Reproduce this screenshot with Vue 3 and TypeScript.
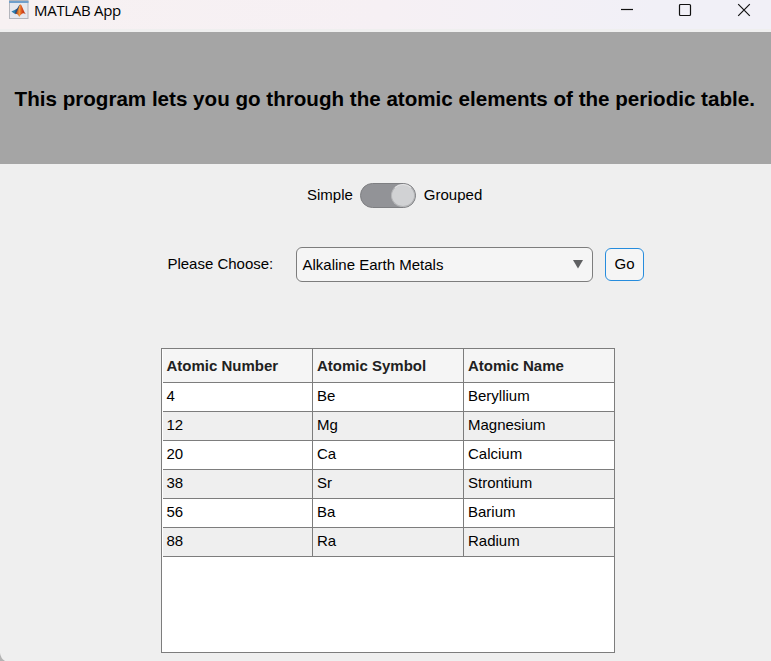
<script setup lang="ts">
import { ref } from 'vue'

interface AtomicElement {
  number: number
  symbol: string
  name: string
}

const grouped = ref<boolean>(true)
const group = ref<string>('Alkaline Earth Metals')
const columns: string[] = ['Atomic Number', 'Atomic Symbol', 'Atomic Name']
const elements: AtomicElement[] = [
  { number: 4, symbol: 'Be', name: 'Beryllium' },
  { number: 12, symbol: 'Mg', name: 'Magnesium' },
  { number: 20, symbol: 'Ca', name: 'Calcium' },
  { number: 38, symbol: 'Sr', name: 'Strontium' },
  { number: 56, symbol: 'Ba', name: 'Barium' },
  { number: 88, symbol: 'Ra', name: 'Radium' },
]
</script>

<template>
  <div class="window">
    <header class="titlebar">
      <svg class="logo" width="20" height="20" viewBox="0 0 20 20">
        <defs>
          <linearGradient id="flame" x1="0" x2="1">
            <stop offset="0" stop-color="#8d2515" />
            <stop offset="0.4" stop-color="#f39a3c" />
            <stop offset="0.65" stop-color="#d9481c" />
            <stop offset="1" stop-color="#a92c12" />
          </linearGradient>
        </defs>
        <rect x="0.5" y="0.5" width="18.5" height="18" fill="#e6e8ee" stroke="#b3b5bc" />
        <rect x="0" y="1" width="19.5" height="2" fill="#6f9fcb" />
        <path d="M2.4 11.6 6.7 9.5 9.5 11.4 6.4 14.2z" fill="#2f7fae" />
        <path d="M6.7 9.5C8.8 9 9.8 4.6 11.3 4.6L9.5 11.5 7.3 14 6.1 12.7z" fill="#294f7c" />
        <path d="M6.2 13.8C8.4 13.3 10.2 4.6 11.4 4.6 13.1 4.8 14 10.5 16.8 14.2 14 12.4 12.7 13.4 10.2 17 9.3 14.8 8.2 13.7 6.2 13.8z" fill="url(#flame)" />
      </svg>
      <span class="app-name">MATLAB App</span>
      <div class="controls">
        <svg width="14" height="14" viewBox="0 0 14 14"><path d="M2 6.5H14" /></svg>
        <svg width="14" height="14" viewBox="0 0 14 14"><rect x="1.5" y="1.5" width="11" height="11" rx="1" /></svg>
        <svg width="14" height="14" viewBox="0 0 14 14"><path d="M1.2 1.2 12.8 12.8M12.8 1.2 1.2 12.8" /></svg>
      </div>
    </header>
    <section class="banner">
      <h1>This program lets you go through the atomic elements of the periodic table.</h1>
    </section>
    <main class="content">
      <div class="mode">
        <span>Simple</span>
        <button class="switch" :class="{ on: grouped }" aria-label="Mode" @click="grouped = !grouped">
          <span class="knob"></span>
        </button>
        <span>Grouped</span>
      </div>
      <div class="chooser">
        <span class="choose-label">Please Choose:</span>
        <div class="dropdown">
          <span>{{ group }}</span>
          <svg width="10" height="9" viewBox="0 0 10 9"><path d="M0 0H10L5 8.5z" fill="#5f6062" /></svg>
        </div>
        <button class="go">Go</button>
      </div>
      <div class="grid">
        <div class="row head">
          <span v-for="c in columns" :key="c" class="cell">{{ c }}</span>
        </div>
        <div v-for="e in elements" :key="e.number" class="row">
          <span class="cell">{{ e.number }}</span>
          <span class="cell">{{ e.symbol }}</span>
          <span class="cell">{{ e.name }}</span>
        </div>
      </div>
    </main>
    <svg class="corner" width="5" height="8" viewBox="0 0 5 8"><path d="M0 0Q0.5 5 5 8H0z" fill="#b4b4b4" /></svg>
  </div>
</template>

<style>
body {
  margin: 0;
}
</style>

<style scoped>
.window {
  position: relative;
  box-sizing: border-box;
  width: 771px;
  height: 661px;
  overflow: hidden;
  background: #efefef;
  color: #000;
  font-family: "Liberation Sans", Arial, sans-serif;
  font-size: 15px;
  line-height: 18px;
}
.titlebar {
  display: flex;
  align-items: flex-start;
  box-sizing: border-box;
  height: 32px;
  padding-left: 9px;
  border-bottom: 3px solid #efefef;
  background: linear-gradient(90deg, #f7f1f2, #f6f0f4 50%, #f1f0f7 85%);
}
.logo {
  flex: none;
}
.app-name {
  margin: 0 0 0 5px;
  font-family: "Open Sans", "Noto Sans", sans-serif;
  font-size: 15px;
  line-height: 20px;
  letter-spacing: -0.3px;
}
.controls {
  display: flex;
  gap: 45px;
  margin: 3px 20px 0 auto;
}
.controls path,
.controls rect {
  fill: none;
  stroke: #111;
  stroke-width: 1.2;
}
.banner {
  display: flex;
  align-items: center;
  justify-content: center;
  height: 132px;
  background: #a5a5a5;
}
h1 {
  margin: 2px 1.5px 0 0;
  font-size: 20.6px;
  line-height: 26px;
  white-space: nowrap;
}
.content {
  display: flex;
  flex-direction: column;
}
.mode {
  display: flex;
  align-items: center;
  height: 26px;
  margin: 18px 0 0 307px;
}
.switch {
  display: flex;
  box-sizing: border-box;
  width: 56px;
  height: 25px;
  margin: 1px 8px 0 7px;
  padding: 0;
  border: 1px solid #7e7f82;
  border-radius: 13px;
  background: #929397;
}
.switch.on {
  justify-content: flex-end;
}
.knob {
  box-sizing: border-box;
  width: 24px;
  height: 23px;
  border: 1px solid #b5b6b8;
  border-top-color: #e4e4e5;
  border-radius: 50%;
  background: #d1d2d4;
}
.chooser {
  display: flex;
  align-items: center;
  height: 35px;
  margin: 39px 0 0 167px;
}
.choose-label {
  box-sizing: border-box;
  width: 129px;
  padding: 0 0 2px 0.4px;
}
.dropdown {
  display: flex;
  align-items: center;
  justify-content: space-between;
  box-sizing: border-box;
  width: 297px;
  height: 35px;
  padding: 0 9px 0 5.5px;
  border: 1px solid #7d7d7d;
  border-radius: 6px;
  background: #f5f5f5;
}
.go {
  box-sizing: border-box;
  width: 39px;
  height: 33px;
  margin-left: 12px;
  padding: 0 0 2px;
  border: 1px solid #268cdd;
  border-radius: 6px;
  background: #f5f5f5;
  color: inherit;
  font: inherit;
}
.grid {
  box-sizing: border-box;
  width: 454px;
  height: 305px;
  margin: 66px 0 0 161px;
  padding-left: 1px;
  border: 1px solid #7d7d7d;
  background: #fff;
}
.row {
  display: grid;
  grid-template-columns: 150px 151px 150px;
  box-sizing: border-box;
  height: 29px;
  border-bottom: 1px solid #7d7d7d;
  line-height: 25px;
}
.row:nth-child(odd) {
  background: #efefef;
}
.cell {
  padding-left: 4px;
}
.cell:first-child {
  padding-left: 3.4px;
}
.cell:not(:last-child) {
  border-right: 1px solid #7d7d7d;
}
.row.head {
  height: 34px;
  background: #f5f5f5;
  color: #212121;
  font-weight: bold;
  line-height: 34px;
}
.corner {
  position: absolute;
  bottom: 0;
  left: 0;
}
</style>
